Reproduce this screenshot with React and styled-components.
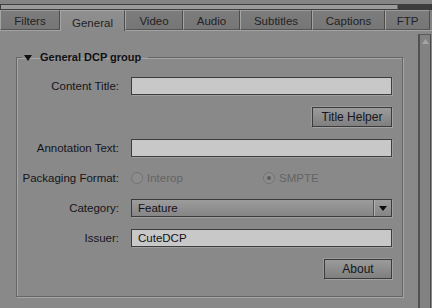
import React from "react";
import styled, { createGlobalStyle } from "styled-components";

const Global = createGlobalStyle`
  html, body {
    margin: 0;
    padding: 0;
    background: #898989;
  }
  * {
    box-sizing: border-box;
  }
`;

const Window = styled.div`
  width: 432px;
  height: 308px;
  overflow: hidden;
  background: #898989;
  font-family: "Liberation Sans", Arial, sans-serif;
  font-size: 11px;
  color: #15151c;
  display: flex;
  flex-direction: column;
`;

const HScroll = styled.div`
  height: 10px;
  padding-top: 4px;
  display: flex;
  background: #858585;
`;

const Thumb = styled.div`
  flex: 1;
  height: 6px;
  background: #9c9c9c;
  border: 1px solid #3e3e3e;
  border-right-color: #6a6a6a;
`;

const ThumbRest = styled.div`
  width: 34px;
  height: 6px;
  background: #3c3c3c;
`;

const TabBar = styled.div`
  height: 21px;
  display: flex;
  align-items: flex-end;
  border-bottom: 1px solid #a3a3a3;
  background: #858585;
`;

const Tab = styled.div`
  width: ${(p) => p.w}px;
  height: ${(p) => (p.active ? 21 : 20)}px;
  margin-bottom: ${(p) => (p.active ? -1 : 0)}px;
  display: flex;
  align-items: center;
  justify-content: center;
  padding-top: ${(p) => (p.active ? 4 : 2)}px;
  font-size: 11.5px;
  color: #222226;
  background: ${(p) =>
    p.active
      ? "linear-gradient(#8f8f8f, #898989)"
      : "linear-gradient(#7c7c7c, #767676)"};
  border-top: 1px solid ${(p) => (p.active ? "#a7a7a7" : "#9b9b9b")};
  border-left: 1px solid #a5a5a5;
  border-right: 1px solid #4c4c4c;
  border-bottom: ${(p) => (p.active ? "none" : "1px solid #555")};
`;

const Body = styled.div`
  flex: 1;
  display: flex;
`;

const Content = styled.div`
  flex: 1;
  padding: 20px 15px 0 16px;
`;

const Group = styled.fieldset`
  margin: 0;
  padding: 13px 10px 17px 0;
  border: 1px solid #666666;
  box-shadow: 1px 1px 0 #a6a6a6, inset 1px 1px 0 #a6a6a6;
  min-width: 0;
`;

const Legend = styled.legend`
  margin-left: 5px;
  padding: 0 7px 0 2px;
  line-height: 13px;
  font-weight: bold;
  color: #101014;
  display: flex;
  align-items: center;
  gap: 8px;
`;

const Form = styled.div`
  display: grid;
  grid-template-columns: 102px 1fr;
  column-gap: 12px;
  row-gap: 12px;
  align-items: center;
`;

const Label = styled.div`
  text-align: right;
  white-space: nowrap;
  font-size: 11.5px;
  color: #15151c;
`;

const Field = styled.div`
  height: 18px;
  background: #c8c8c8;
  border: 1px solid #3d3d3d;
  box-shadow: 1px 1px 0 #9e9e9e;
  padding: 0 6px;
  display: flex;
  align-items: center;
  font-size: 11.5px;
  color: #101018;
`;

const ButtonRow = styled.div`
  grid-column: 2;
  display: flex;
  justify-content: flex-end;
`;

const Button = styled.div`
  width: ${(p) => p.w}px;
  height: 20px;
  display: flex;
  align-items: center;
  justify-content: center;
  background: linear-gradient(#9b9b9b, #7f7f7f);
  border: 1px solid #3b3b3b;
  box-shadow: 1px 1px 0 #a2a2a2, -1px -1px 0 #9a9a9a;
  color: #161620;
  font-size: 12px;
`;

const Radios = styled.div`
  height: 18px;
  display: flex;
  align-items: center;
`;

const RadioItem = styled.div`
  width: ${(p) => p.w}px;
  display: flex;
  align-items: center;
  gap: 4px;
  font-size: 11.5px;
  color: #646464;
`;

const RadioCircle = styled.div`
  width: 12px;
  height: 12px;
  border-radius: 50%;
  border: 1px solid #747474;
  background: #8c8c8c;
  display: flex;
  align-items: center;
  justify-content: center;
  &::after {
    content: "";
    width: 4px;
    height: 4px;
    border-radius: 50%;
    background: ${(p) => (p.checked ? "#5c5c5c" : "transparent")};
  }
`;

const Combo = styled.div`
  height: 18px;
  display: flex;
  background: linear-gradient(#9c9c9c, #858585);
  border: 1px solid #3b3b3b;
  box-shadow: 1px 1px 0 #a0a0a0;
  font-size: 11.5px;
  color: #12121a;
`;

const ComboText = styled.div`
  flex: 1;
  padding-left: 6px;
  display: flex;
  align-items: center;
  border-right: 1px solid #555;
`;

const ComboArrow = styled.div`
  width: 17px;
  border-left: 1px solid #b0b0b0;
  display: flex;
  align-items: center;
  justify-content: center;
`;

const VScroll = styled.div`
  width: 13px;
  margin: 3px 1px 0 0;
  background: #828282;
  border-left: 2px solid #505050;
  border-right: 1px solid #4a4a4a;
  border-top: 1px solid #5a5a5a;
  display: flex;
  justify-content: center;
  padding-top: 4px;
`;

const tabs = [
  ["Filters", 60],
  ["General", 65],
  ["Video", 58],
  ["Audio", 57],
  ["Subtitles", 72],
  ["Captions", 73],
  ["FTP", 45],
];

export default function App() {
  return (
    <Window>
      <Global />
      <HScroll>
        <Thumb />
        <ThumbRest />
      </HScroll>
      <TabBar>
        {tabs.map(([name, w]) => (
          <Tab key={name} w={w} active={name === "General"}>
            {name}
          </Tab>
        ))}
      </TabBar>
      <Body>
        <Content>
          <Group>
            <Legend>
              <svg width="8" height="6" viewBox="0 0 8 6">
                <path d="M0 0H8L4 6Z" fill="#111" />
              </svg>
              General DCP group
            </Legend>
            <Form>
              <Label>Content Title:</Label>
              <Field />
              <ButtonRow>
                <Button w={80}>Title Helper</Button>
              </ButtonRow>
              <Label>Annotation Text:</Label>
              <Field />
              <Label>Packaging Format:</Label>
              <Radios>
                <RadioItem w={132}>
                  <RadioCircle />
                  Interop
                </RadioItem>
                <RadioItem w={80}>
                  <RadioCircle checked />
                  SMPTE
                </RadioItem>
              </Radios>
              <Label>Category:</Label>
              <Combo>
                <ComboText>Feature</ComboText>
                <ComboArrow>
                  <svg width="8" height="5" viewBox="0 0 8 5">
                    <path d="M0 0H8L4 5Z" fill="#0c0c0c" />
                  </svg>
                </ComboArrow>
              </Combo>
              <Label>Issuer:</Label>
              <Field>CuteDCP</Field>
              <ButtonRow>
                <Button w={68}>About</Button>
              </ButtonRow>
            </Form>
          </Group>
        </Content>
        <VScroll>
          <svg width="7" height="5" viewBox="0 0 7 5">
            <path d="M0 5L3.5 0L7 5Z" fill="#a4a4a4" />
          </svg>
        </VScroll>
      </Body>
    </Window>
  );
}
